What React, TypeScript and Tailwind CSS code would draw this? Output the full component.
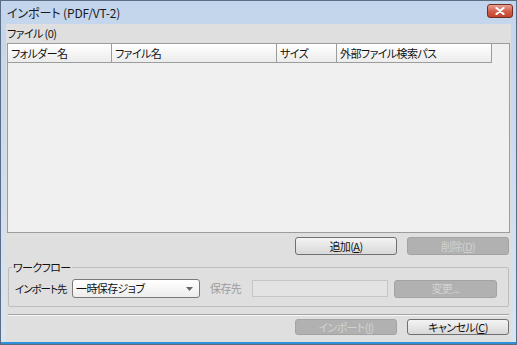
import React from "react";

interface BtnProps {
  text: string;
  mnemonic?: string;
  disabled?: boolean;
  className?: string;
}

// Win7 style push button, mnemonic letter underlined
const Btn: React.FC<BtnProps> = ({ text, mnemonic, disabled, className }) => (
  <div
    className={`flex items-center justify-center whitespace-nowrap rounded-[3px] border text-[11px] leading-none ${
      disabled
        ? "border-[#a3a3a3] bg-[#b1b1b1] text-[#d2d2d2]"
        : "border-[#707070] bg-gradient-to-b from-[#f4f4f4] to-[#d8d8d8] text-[#111]"
    } ${className ?? ""}`}
  >
    {text}
    {mnemonic && (
      <>
        (<span className="underline">{mnemonic}</span>)
      </>
    )}
  </div>
);

const columns = [
  { name: "フォルダー名", w: "w-[104px]" },
  { name: "ファイル名", w: "w-[165px]" },
  { name: "サイズ", w: "w-[60px]" },
  { name: "外部ファイル検索パス", w: "w-[155px]" },
];

export default function App() {
  return (
    <div className="flex h-[345px] w-[517px] flex-col overflow-hidden border border-[#5b6d82] bg-gradient-to-b from-[#c3d5ec] to-[#d9e5f3] font-['Noto_Sans_CJK_JP','Noto_Sans',sans-serif] tracking-[-0.6px] text-[#111] [font-feature-settings:'palt']">
      {/* title bar */}
      <div className="flex h-[23px] shrink-0 items-center justify-between pl-[6px] pr-[3px]">
        <span className="text-[12px] tracking-[-0.1px] text-[#1a1a1a]">インポート (PDF/VT-2)</span>
        <div className="mt-[-4px] flex h-[14px] w-[26px] items-center justify-center rounded-[3px] border border-[#6e3025] bg-gradient-to-b from-[#e9a295] via-[#d3604c] to-[#c2402b]">
          <svg width="10" height="8" viewBox="0 0 10 8">
            <path d="M1.5 1 L8.5 7 M8.5 1 L1.5 7" stroke="#fff" strokeWidth="2.2" strokeLinecap="round" />
          </svg>
        </div>
      </div>

      {/* client area */}
      <div className="mx-[5px] flex flex-1 flex-col bg-[#dfdfdf] px-[1px]">
        <div className="flex h-[19px] items-center text-[11px]">ファイル (0)</div>

        {/* file list */}
        <div className="flex h-[190px] flex-col border border-[#9c9c9c] bg-[#f0f0f0]">
          <div className="flex h-[19px]">
            {columns.map((c) => (
              <div
                key={c.name}
                className={`${c.w} flex items-center whitespace-nowrap border-r border-b border-[#9c9c9c] bg-gradient-to-b from-[#ffffff] to-[#ececec] pl-[3px] text-[11px]`}
              >
                {c.name}
              </div>
            ))}
            <div className="flex-1" />
          </div>
        </div>

        <div className="mt-[4px] flex h-[18px] justify-end gap-[10px] pr-[1px]">
          <Btn text="追加" mnemonic="A" className="w-[102px]" />
          <Btn text="削除" mnemonic="D" disabled className="w-[102px]" />
        </div>

        {/* workflow group */}
        <fieldset className="mx-[1px] mt-[6px] h-[46px] rounded-[2px] border border-[#bdbdbd] px-[6px]">
          <legend className="ml-[-3px] px-[1px] text-[11px] leading-[12px]">ワークフロー</legend>
          <div className="mt-[6px] flex items-center">
            <span className="w-[57px] shrink-0 whitespace-nowrap text-[10.5px] tracking-[-1px]">インポート先</span>
            <div className="flex h-[19px] w-[128px] shrink-0 items-center justify-between rounded-[3px] border border-[#7a7a7a] bg-gradient-to-b from-[#ffffff] to-[#ededed] pl-[3px] pr-[6px] text-[11px]">
              <span className="whitespace-nowrap">一時保存ジョブ</span>
              <svg width="7" height="4" viewBox="0 0 7 4">
                <path d="M0 0 L7 0 L3.5 4 Z" fill="#666" />
              </svg>
            </div>
            <span className="ml-[10px] w-[42px] shrink-0 whitespace-nowrap text-[11px] text-[#9b9b9b]">保存先</span>
            <div className="h-[17px] w-[136px] shrink-0 border border-[#c6c6c6] bg-[#e3e3e3]" />
            <Btn text="変更..." disabled className="ml-[6px] h-[18px] w-[103px] shrink-0" />
          </div>
        </fieldset>

        {/* separator */}
        <div className="mx-[1px] mt-[7px] border-t border-b border-t-[#a3a3a3] border-b-[#f7f7f7]" />

        <div className="mt-[3px] flex h-[16px] justify-end gap-[10px] pr-[1px]">
          <Btn text="インポート" mnemonic="I" disabled className="w-[102px]" />
          <Btn text="キャンセル" mnemonic="C" className="w-[102px]" />
        </div>
      </div>
      <div className="h-[2px] shrink-0 bg-[#2f8fd8]" />
    </div>
  );
}
